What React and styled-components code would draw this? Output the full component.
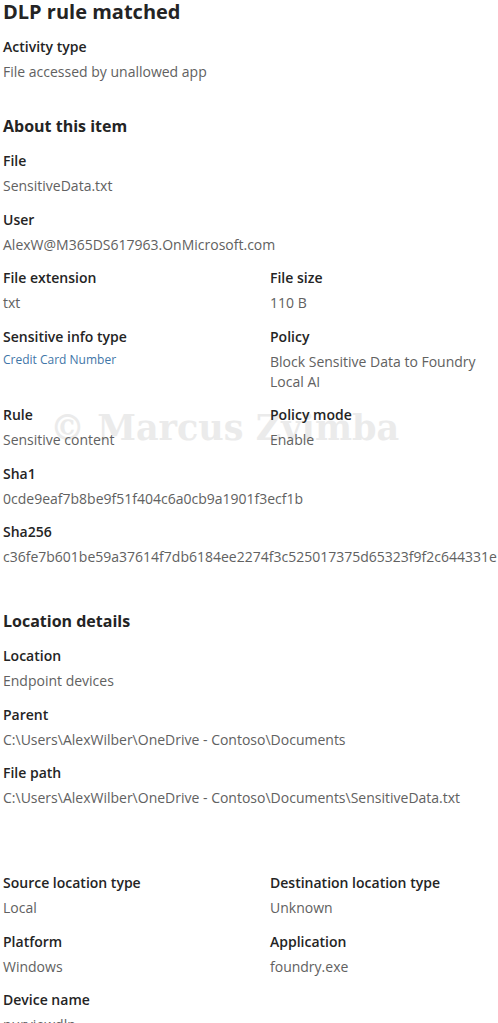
import styled, { createGlobalStyle } from "styled-components";

const GlobalStyle = createGlobalStyle`
    * {
        box-sizing: border-box;
    }

    body {
        margin: 0;
        background: #ffffff;
        font-family: "Open Sans", "Noto Sans", sans-serif;
        color: #242424;
    }
`;

const activityFields = [
    { label: "Activity type", value: "File accessed by unallowed app", wide: true },
];

const aboutFields = [
    { label: "File", value: "SensitiveData.txt", wide: true },
    { label: "User", value: "AlexW@M365DS617963.OnMicrosoft.com", wide: true },
    { label: "File extension", value: "txt" },
    { label: "File size", value: "110 B" },
    { label: "Sensitive info type", value: "Credit Card Number", link: true },
    { label: "Policy", value: "Block Sensitive Data to Foundry Local AI" },
    { label: "Rule", value: "Sensitive content" },
    { label: "Policy mode", value: "Enable" },
    { label: "Sha1", value: "0cde9eaf7b8be9f51f404c6a0cb9a1901f3ecf1b", wide: true },
    {
        label: "Sha256",
        value: "c36fe7b601be59a37614f7db6184ee2274f3c525017375d65323f9f2c644331e",
        wide: true,
    },
];

const locationFields = [
    { label: "Location", value: "Endpoint devices", wide: true },
    {
        label: "Parent",
        value: "C:\\Users\\AlexWilber\\OneDrive - Contoso\\Documents",
        wide: true,
    },
    {
        label: "File path",
        value: "C:\\Users\\AlexWilber\\OneDrive - Contoso\\Documents\\SensitiveData.txt",
        wide: true,
    },
];

const deviceFields = [
    { label: "Source location type", value: "Local" },
    { label: "Destination location type", value: "Unknown" },
    { label: "Platform", value: "Windows" },
    { label: "Application", value: "foundry.exe" },
    { label: "Device name", value: "purviewdlp" },
];

const Field = ({ label, value, wide, link }) => (
    <StyledField $wide={wide}>
        <Label>{label}</Label>
        <Value $link={link}>{value}</Value>
    </StyledField>
);

const FieldGrid = ({ fields }) => (
    <Grid>
        {fields.map((f) => (
            <Field key={f.label} {...f} />
        ))}
    </Grid>
);

const App = () => {
    return (
        <>
            <GlobalStyle />
            <Page>
                <Title>DLP rule matched</Title>

                <Section $top={13}>
                    <FieldGrid fields={activityFields} />
                </Section>

                <Section $top={33}>
                    <Heading>About this item</Heading>
                    <FieldGrid fields={aboutFields} />
                </Section>

                <Section $top={43}>
                    <Heading>Location details</Heading>
                    <FieldGrid fields={locationFields} />
                </Section>

                <Section $top={65}>
                    <FieldGrid fields={deviceFields} />
                </Section>

                {/* copyright stamp laid over the panel */}
                <Watermark aria-hidden="true">© Marcus Zvimba</Watermark>
            </Page>
        </>
    );
};

const Page = styled.div`
    position: relative;
    z-index: 0;
    width: 498px;
    padding: 0 3px 40px;
`;

const Title = styled.h1`
    margin: 0;
    font-size: 20px;
    line-height: 24px;
    font-weight: 700;
    color: #242424;
`;

const Section = styled.section`
    margin-top: ${({ $top }) => $top}px;
`;

const Heading = styled.h2`
    margin: 0 0 14px;
    font-size: 16px;
    line-height: 22px;
    font-weight: 700;
    color: #242424;
`;

const Grid = styled.div`
    display: grid;
    grid-template-columns: 267px 1fr;
    row-gap: 13.5px;
`;

const StyledField = styled.div`
    grid-column: ${({ $wide }) => ($wide ? "1 / -1" : "auto")};
    min-width: 0;
`;

const Label = styled.div`
    font-size: 14px;
    line-height: 20px;
    font-weight: 600;
    color: #242424;
`;

const Value = styled.div`
    margin-top: 5px;
    font-size: ${({ $link }) => ($link ? "12px" : "14px")};
    line-height: ${({ $link }) => ($link ? "16px" : "20px")};
    color: ${({ $link }) => ($link ? "#3f76a8" : "#616161")};
    white-space: ${({ $link }) => ($link ? "nowrap" : "normal")};
    padding-right: 12px;
`;

const Watermark = styled.div`
    position: absolute;
    z-index: -1;
    left: 50px;
    top: 408px;
    font-family: "DejaVu Serif", "Liberation Serif", serif;
    font-weight: 700;
    font-size: 35px;
    line-height: 40px;
    color: #ebebeb;
    white-space: nowrap;
    pointer-events: none;
`;

export default App;
